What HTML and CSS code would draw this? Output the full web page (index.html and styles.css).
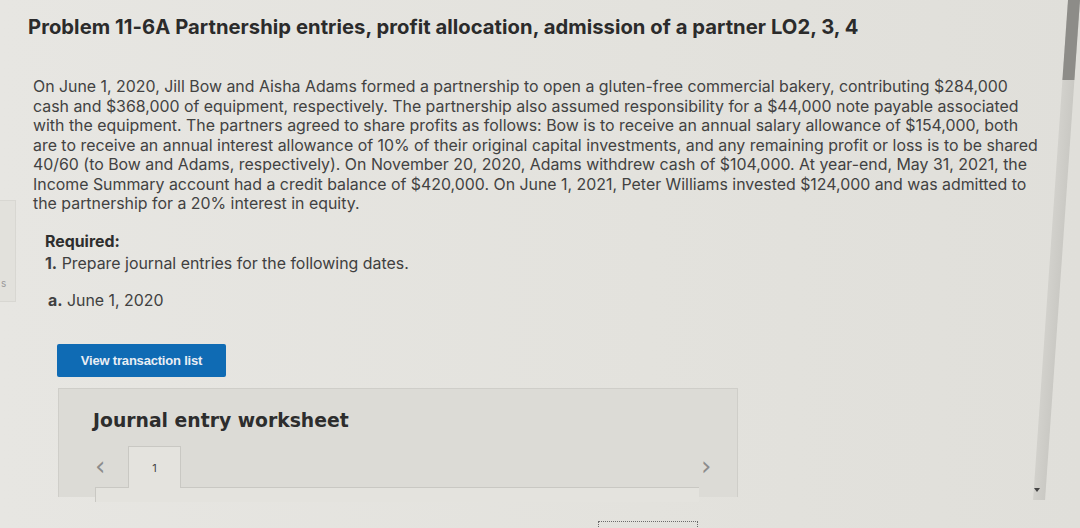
FILE: index.html
```html
<!DOCTYPE html>
<html lang="en">
<head>
<meta charset="utf-8">
<title>Problem 11-6A</title>
<link rel="stylesheet" href="styles.css">
</head>
<body>
<div class="page">
  <div class="side-tab"><span class="side-letter">s</span></div>
  <main class="content">
    <h1 class="title">Problem 11-6A Partnership entries, profit allocation, admission of a partner LO2, 3, 4</h1>
    <p class="problem">On June 1, 2020, Jill Bow and Aisha Adams formed a partnership to open a gluten-free commercial bakery, contributing $284,000<br>cash and $368,000 of equipment, respectively. The partnership also assumed responsibility for a $44,000 note payable associated<br>with the equipment. The partners agreed to share profits as follows: Bow is to receive an annual salary allowance of $154,000, both<br>are to receive an annual interest allowance of 10% of their original capital investments, and any remaining profit or loss is to be shared<br>40/60 (to Bow and Adams, respectively). On November 20, 2020, Adams withdrew cash of $104,000. At year-end, May 31, 2021, the<br>Income Summary account had a credit balance of $420,000. On June 1, 2021, Peter Williams invested $124,000 and was admitted to<br>the partnership for a 20% interest in equity.</p>
    <div class="required">
      <div class="req-label">Required:</div>
      <div class="req-item"><b>1.</b> Prepare journal entries for the following dates.</div>
    </div>
    <div class="sub"><b>a.</b> June 1, 2020</div>
    <button class="btn" type="button">View transaction list</button>
    <section class="worksheet">
      <h2 class="ws-title">Journal entry worksheet</h2>
      <div class="tab-row">
        <span class="arrow prev">&lsaquo;</span>
        <span class="tab">1</span>
        <span class="spacer"></span>
        <span class="arrow next">&rsaquo;</span>
      </div>
      <div class="sheet"></div>
    </section>
    <div class="focus-dots"></div>
  </main>
  <div class="scrollbar"><div class="thumb"></div></div>
  <div class="scroll-arrow"></div>
</div>
</body>
</html>
```
FILE: styles.css
```css
html, body {
  margin: 0;
  padding: 0;
  height: 100%;
  overflow: hidden;
  background: #e5e4df;
}
.page {
  position: relative;
  width: 1080px;
  height: 528px;
  overflow: hidden;
  background: linear-gradient(90deg, #e7e6e2 0%, #e3e2dd 60%, #e0dfda 100%);
  font-family: Inter, "Open Sans", sans-serif;
  color: #353535;
}
.content {
  padding-left: 28px;
}
.title {
  margin: 0;
  padding-top: 14px;
  font-size: 20.2px;
  line-height: 25px;
  font-weight: 700;
  letter-spacing: 0.05px;
  color: #2b2b2b;
}
.problem {
  margin: 38px 0 0 0;
  padding-left: 5px;
  font-size: 15.9px;
  line-height: 19.5px;
  color: #424242;
}
.required {
  margin-top: 17px;
  padding-left: 17px;
  font-size: 15.9px;
  line-height: 22px;
  color: #404040;
}
.req-label {
  font-weight: 700;
  color: #2e2e2e;
}
.sub {
  margin-top: 15px;
  padding-left: 20px;
  font-size: 15.9px;
  line-height: 22px;
  color: #404040;
}
.btn {
  display: block;
  margin: 32px 0 0 29px;
  width: 169px;
  height: 33px;
  border: none;
  border-radius: 2px;
  background: #0f6bb4;
  color: #e9eef4;
  font-family: "Liberation Sans", Arial, sans-serif;
  font-weight: 700;
  font-size: 13px;
  letter-spacing: -0.2px;
  padding: 0;
}
.worksheet {
  margin: 11px 0 0 30px;
  width: 680px;
  height: 109px;
  border: 1px solid #cfcec9;
  border-bottom: none;
  background: #dcdbd6;
  box-sizing: border-box;
  padding-top: 20px;
}
.ws-title {
  margin: 0;
  padding-left: 34px;
  font-family: "DejaVu Sans", Verdana, sans-serif;
  font-size: 18.8px;
  line-height: 24px;
  font-weight: 700;
  color: #2d2d2d;
}
.tab-row {
  display: flex;
  align-items: center;
  margin-top: 13px;
  height: 41px;
  padding-left: 36px;
  padding-right: 24px;
}
.arrow {
  font-family: "DejaVu Sans", sans-serif;
  font-size: 26px;
  line-height: 26px;
  color: #8c8c8c;
  width: 12px;
}
.prev {
  margin-right: 21px;
}
.tab {
  position: relative;
  z-index: 1;
  align-self: stretch;
  width: 53px;
  box-sizing: border-box;
  border: 1px solid #c9c8c3;
  border-bottom: none;
  background: #e4e3de;
  margin-bottom: -1px;
  font-size: 11px;
  color: #444;
  display: flex;
  align-items: center;
  justify-content: center;
  padding-top: 2px;
}
.spacer {
  flex: 1;
}
.sheet {
  margin-left: 36px;
  width: 603px;
  height: 14px;
  border-top: 1px solid #c9c8c3;
  border-left: 1px solid #c9c8c3;
  background: #e4e3de;
}
.focus-dots {
  margin: 24px 0 0 570px;
  width: 98px;
  height: 12px;
  border: 1px dotted #6b6b6b;
}
.side-tab {
  position: absolute;
  left: 0;
  top: 200px;
  width: 15px;
  height: 100px;
  border-right: 1px solid #d8d7d2;
  border-top: 1px solid #d8d7d2;
  border-bottom: 1px solid #d8d7d2;
  background: #e2e1dc;
}
.side-letter {
  position: absolute;
  left: 1px;
  top: 76px;
  font-size: 10px;
  color: #9a9a9a;
}
.scrollbar {
  position: absolute;
  top: 0;
  left: 1068px;
  width: 12px;
  height: 500px;
  background: linear-gradient(90deg, #d2d1cc, #cac9c4);
  transform-origin: top right;
  transform: skewX(-4deg);
}
.thumb {
  width: 100%;
  height: 80px;
  background: #8d8c88;
}
.scroll-arrow {
  position: absolute;
  left: 1034px;
  top: 488px;
  width: 0;
  height: 0;
  border-left: 3px solid transparent;
  border-right: 3px solid transparent;
  border-top: 4px solid #444;
}
```
